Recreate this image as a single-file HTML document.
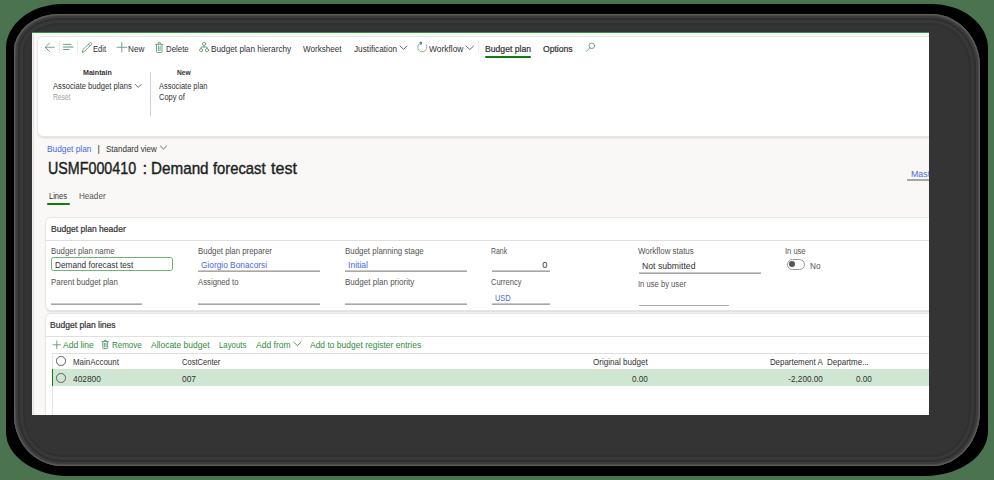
<!DOCTYPE html>
<html><head><meta charset="utf-8">
<style>
html,body{margin:0;padding:0;}
body{width:994px;height:480px;position:relative;overflow:hidden;background:#4b7350;font-family:"Liberation Sans",sans-serif;}
.abs{position:absolute;}
.t{position:absolute;white-space:nowrap;line-height:1;}
#blk{position:absolute;left:6px;top:4px;width:982px;height:472px;background:#000;border-radius:57px 57px 63px 63px / 44px 44px 45px 44px;}
#gry{position:absolute;left:14px;top:14px;width:966px;height:452px;background:#343434;border-radius:45px 49px 48px 48px / 37px 53px 56px 51px;
 box-shadow:inset 0 0 0 1px #5c5c5c, inset 0 0 0 2px #4a4a4a, inset 0 0 0 4px #3c3c3c, inset 0 0 0 6px #2f2f2f, inset 0 0 0 9px #383838, inset 0 0 0 11px #303030;}
#page{position:absolute;left:32px;top:32px;width:897px;height:383px;overflow:hidden;background:#f9f8f7;}
#inner{position:absolute;left:-32px;top:-32px;width:994px;height:480px;}
.panel{position:absolute;background:#fff;border-radius:5px;box-shadow:0 0 0 1px #e8e6e4, 0 1.2px 2px rgba(0,0,0,0.13);}
.hl{position:absolute;height:1px;}
.vl{position:absolute;width:1px;}
svg{position:absolute;overflow:visible;}
</style></head>
<body>
<div id="blk"></div>
<div id="gry"></div>
<div id="page"><div id="inner">
<!-- top green line -->
<div class="hl" style="left:32px;top:32px;width:897px;background:#1f9a3a;"></div>
<div class="hl" style="left:32px;top:33px;width:897px;background:#fff;"></div>
<div class="vl" style="left:32px;top:33px;height:383px;background:#f1f0ef;"></div>
<div class="vl" style="left:33px;top:34px;height:383px;background:#e4e3e2;"></div>
<!-- action pane -->
<div class="panel" style="left:38px;top:37px;width:940px;height:99px;"></div>
<div class="vl" style="left:59px;top:41px;height:12px;background:#ebeae9;"></div>
<div class="vl" style="left:77px;top:41px;height:12px;background:#ebeae9;"></div>
<div class="vl" style="left:478px;top:41px;height:12px;background:#ebeae9;"></div>
<div class="abs" style="left:485px;top:55.5px;width:46px;height:2px;background:#107c10;border-radius:1px;"></div>
<div class="vl" style="left:149.5px;top:72px;height:44px;background:#d2d0ce;"></div>
<!-- header panel -->
<div class="panel" style="left:46px;top:218px;width:940px;height:92px;"></div>
<div class="hl" style="left:46px;top:240px;width:900px;background:#e1dfdd;"></div>
<!-- tabs underline -->
<div class="abs" style="left:46.5px;top:203.3px;width:23.5px;height:2px;background:#107c10;border-radius:1px;"></div>
<!-- mast underline -->
<div class="abs" style="left:907.4px;top:179.3px;width:30px;height:1.5px;background:#a8a6a4;"></div>
<!-- inputs -->
<div class="abs" style="left:51.2px;top:257.3px;width:119.6px;height:11.8px;border:1.3px solid #6cb574;border-radius:2.5px;background:#fff;"></div>
<div class="abs" style="left:198px;top:270px;width:121.7px;height:2px;background:linear-gradient(#cac8c6 50%,#a9a7a5 50%);"></div>
<div class="abs" style="left:345px;top:270px;width:121.6px;height:2px;background:linear-gradient(#cac8c6 50%,#a9a7a5 50%);"></div>
<div class="abs" style="left:491.6px;top:270px;width:58.2px;height:2px;background:linear-gradient(#cac8c6 50%,#a9a7a5 50%);"></div>
<div class="abs" style="left:639px;top:272px;width:121.8px;height:2px;background:linear-gradient(#cac8c6 50%,#a9a7a5 50%);"></div>
<div class="abs" style="left:51px;top:302.5px;width:90.7px;height:2px;background:linear-gradient(#cac8c6 50%,#a9a7a5 50%);"></div>
<div class="abs" style="left:198px;top:302.5px;width:121.7px;height:2px;background:linear-gradient(#cac8c6 50%,#a9a7a5 50%);"></div>
<div class="abs" style="left:345px;top:302.5px;width:121.6px;height:2px;background:linear-gradient(#cac8c6 50%,#a9a7a5 50%);"></div>
<div class="abs" style="left:491.6px;top:302.5px;width:58.2px;height:2px;background:linear-gradient(#cac8c6 50%,#a9a7a5 50%);"></div>
<div class="abs" style="left:639px;top:304.6px;width:90.3px;height:1.4px;background:#a9a7a5;"></div>
<!-- toggle -->
<div class="abs" style="left:786.8px;top:259.2px;width:15.9px;height:8.9px;border:1.25px solid #9d9b99;border-radius:5.5px;"></div>
<div class="abs" style="left:789.1px;top:260.9px;width:5.8px;height:5.8px;border-radius:50%;background:#575553;"></div>
<!-- lines panel -->
<div class="panel" style="left:46px;top:314px;width:940px;height:140px;"></div>
<div class="hl" style="left:46px;top:336px;width:900px;background:#e1dfdd;"></div>
<!-- grid -->
<div class="abs" style="left:51.5px;top:352.8px;width:900px;height:100px;border-left:1px solid #e6e4e2;border-top:1.3px solid #e1dfdd;"></div>
<div class="hl" style="left:52px;top:368.5px;width:900px;background:#dedcda;"></div>
<div class="abs" style="left:52px;top:369.4px;width:900px;height:16.2px;background:#cfe6d2;"></div>
<div class="abs" style="left:51.5px;top:369.4px;width:1.7px;height:16.2px;background:#107c10;"></div>
<div class="abs" style="left:56.3px;top:356px;width:7.5px;height:7.5px;border:1px solid #605e5c;border-radius:50%;"></div>
<div class="abs" style="left:56.3px;top:373.1px;width:7.5px;height:7.5px;border:1px solid #605e5c;border-radius:50%;"></div>
<!-- icons -->
<svg style="left:0;top:0" width="994" height="480" viewBox="0 0 994 480">
 <g fill="none" stroke="#5c9470" stroke-width="0.85" stroke-linecap="round" stroke-linejoin="round">
  <!-- back arrow -->
  <path d="M49.6 43.1 L45.2 47.3 L49.6 51.5 M45.4 47.3 H54.2"/>
  <!-- lines icon -->
  <path d="M63.5 44.4 H71 M63.5 49.5 H69.2" stroke-width="0.9"/><path d="M63.5 47 H73" stroke-width="1.2"/>
  <!-- pencil -->
  <path d="M82.4 52.1 L83 49.6 L89.7 42.9 Q90.5 42.1 91.3 42.9 Q92.1 43.7 91.3 44.5 L84.6 51.3 Z M88.4 44.2 L90 45.8"/>
  <!-- plus -->
  <path d="M117 47.3 H126.7 M121.8 42.5 V52"/>
  <!-- trash -->
  <path d="M155.5 44.3 H163 M156.5 44.5 V51.5 Q156.5 52.5 157.5 52.5 H161 Q162 52.5 162 51.5 V44.5 M158.3 44.2 V43 Q158.3 42.4 158.9 42.4 H159.7 Q160.3 42.4 160.3 43 V44.2 M158.4 46.2 V50.6 M160.1 46.2 V50.6"/>
  <!-- hierarchy -->
  <circle cx="204.1" cy="43.8" r="1.6"/>
  <circle cx="201.1" cy="50.2" r="1.6"/>
  <circle cx="207.1" cy="50.2" r="1.6"/>
  <path d="M204.1 45.4 V47 M201.1 48.6 V47 H207.1 V48.6"/>
  <!-- workflow -->
  <path d="M421.5 42.8 A4.5 4.5 0 1 0 426.2 45" stroke-dasharray="1.2 0.9"/>
  <path d="M420.2 42.3 L421.6 42.8 L420.8 44.2" stroke="#2e7d32" stroke-width="1.2"/>
  <!-- search -->
  <circle cx="591.8" cy="45.8" r="2.8"/>
  <path d="M589.8 47.9 L586.3 51.5"/>
  <!-- grid toolbar plus -->
  <path d="M53 344.8 H60.6 M56.8 341 V348.6"/>
  <!-- grid trash -->
  <path d="M102 341.6 H108.4 M102.8 341.8 V347.8 Q102.8 348.6 103.6 348.6 H106.8 Q107.6 348.6 107.6 347.8 V341.8 M104.2 341.5 V340.4 H106.2 V341.5 M104.4 343.4 V347 M106 343.4 V347" stroke-width="0.9"/>
 </g>
 <g fill="none" stroke="#514f4d" stroke-width="0.85" stroke-linecap="round" stroke-linejoin="round">
  <!-- chevrons -->
  <path d="M400 46 L403.5 49.4 L407 46"/>
  <path d="M466 46 L469.8 49.6 L473.6 46"/>
  <path d="M135.2 84.4 L138.2 87.4 L141.2 84.4"/>
  <path d="M160.4 146 L163.5 149 L166.6 146"/>
 </g>
 <g fill="none" stroke="#44904f" stroke-width="0.9" stroke-linecap="round" stroke-linejoin="round">
  <path d="M293.8 342.2 L297.4 345.7 L301 342.2"/>
 </g>
</svg>

<div class="t" style="top:45px;font-size:9.18px;color:#323130;left:92.80px;transform-origin:0 50%;transform:scaleX(0.8305);">Edit</div>
<div class="t" style="top:45px;font-size:9.18px;color:#323130;left:127.80px;transform-origin:0 50%;transform:scaleX(0.8919);">New</div>
<div class="t" style="top:45px;font-size:9.18px;color:#323130;left:166.20px;transform-origin:0 50%;transform:scaleX(0.8557);">Delete</div>
<div class="t" style="top:45px;font-size:9.18px;color:#323130;left:210.80px;transform-origin:0 50%;transform:scaleX(0.8991);">Budget plan hierarchy</div>
<div class="t" style="top:45px;font-size:9.18px;color:#323130;left:303.00px;transform-origin:0 50%;transform:scaleX(0.8839);">Worksheet</div>
<div class="t" style="top:45px;font-size:9.18px;color:#323130;left:353.70px;transform-origin:0 50%;transform:scaleX(0.8992);">Justification</div>
<div class="t" style="top:45px;font-size:9.18px;color:#323130;left:428.50px;transform-origin:0 50%;transform:scaleX(0.9151);">Workflow</div>
<div class="t" style="top:45px;font-size:9.18px;color:#323130;left:485.00px;transform-origin:0 50%;transform:scaleX(0.9415);-webkit-text-stroke:0.22px #323130;">Budget plan</div>
<div class="t" style="top:45px;font-size:9.18px;color:#323130;left:542.50px;transform-origin:0 50%;transform:scaleX(0.9368);-webkit-text-stroke:0.22px #323130;">Options</div>
<div class="t" style="top:69px;font-size:7.84px;color:#323130;font-weight:bold;left:82.80px;transform-origin:0 50%;transform:scaleX(0.9072);">Maintain</div>
<div class="t" style="top:82px;font-size:8.51px;color:#323130;left:52.80px;transform-origin:0 50%;transform:scaleX(0.8957);">Associate budget plans</div>
<div class="t" style="top:93px;font-size:8.29px;color:#a19f9d;left:52.80px;transform-origin:0 50%;transform:scaleX(0.8060);">Reset</div>
<div class="t" style="top:69px;font-size:7.84px;color:#323130;font-weight:bold;left:176.70px;transform-origin:0 50%;transform:scaleX(0.8467);">New</div>
<div class="t" style="top:82px;font-size:8.51px;color:#323130;left:159.20px;transform-origin:0 50%;transform:scaleX(0.8766);">Associate plan</div>
<div class="t" style="top:93px;font-size:8.51px;color:#323130;left:159.40px;transform-origin:0 50%;transform:scaleX(0.8820);">Copy of</div>
<div class="t" style="top:145px;font-size:9.18px;color:#4a68e6;left:46.70px;transform-origin:0 50%;transform:scaleX(0.9088);">Budget plan</div>
<div class="t" style="top:145px;font-size:9.18px;color:#323130;left:97.40px;transform-origin:0 50%;">|</div>
<div class="t" style="top:145px;font-size:9.18px;color:#323130;left:105.50px;transform-origin:0 50%;transform:scaleX(0.8718);">Standard view</div>
<div class="t" style="top:161px;font-size:16.69px;color:#201f1e;left:48.16px;transform-origin:0 50%;transform:scaleX(0.8556);-webkit-text-stroke:0.4px #201f1e;">USMF000410</div>
<div class="t" style="top:161px;font-size:16.69px;color:#201f1e;left:142.40px;transform-origin:0 50%;-webkit-text-stroke:0.4px #201f1e;">:</div>
<div class="t" style="top:161px;font-size:16.69px;color:#201f1e;left:151.31px;transform-origin:0 50%;transform:scaleX(0.9127);-webkit-text-stroke:0.4px #201f1e;">Demand</div>
<div class="t" style="top:161px;font-size:16.69px;color:#201f1e;left:213.20px;transform-origin:0 50%;transform:scaleX(0.8858);-webkit-text-stroke:0.4px #201f1e;">forecast</div>
<div class="t" style="top:161px;font-size:16.69px;color:#201f1e;left:271.30px;transform-origin:0 50%;transform:scaleX(0.9611);-webkit-text-stroke:0.4px #201f1e;">test</div>
<div class="t" style="top:170px;font-size:9.3px;color:#4a68e6;left:910.80px;transform-origin:0 50%;transform:scaleX(0.9483);">Mast</div>
<div class="t" style="top:192px;font-size:8.96px;color:#323130;left:48.60px;transform-origin:0 50%;transform:scaleX(0.8346);">Lines</div>
<div class="t" style="top:192px;font-size:8.96px;color:#55534f;left:78.80px;transform-origin:0 50%;transform:scaleX(0.9053);">Header</div>
<div class="t" style="top:225px;font-size:9.18px;color:#323130;left:50.50px;transform-origin:0 50%;transform:scaleX(0.9336);-webkit-text-stroke:0.22px #323130;">Budget plan header</div>
<div class="t" style="top:247px;font-size:8.85px;color:#55534f;left:50.70px;transform-origin:0 50%;transform:scaleX(0.8850);">Budget plan name</div>
<div class="t" style="top:247px;font-size:8.85px;color:#55534f;left:197.60px;transform-origin:0 50%;transform:scaleX(0.8900);">Budget plan preparer</div>
<div class="t" style="top:247px;font-size:8.85px;color:#55534f;left:344.70px;transform-origin:0 50%;transform:scaleX(0.8944);">Budget planning stage</div>
<div class="t" style="top:247px;font-size:8.85px;color:#55534f;left:491.40px;transform-origin:0 50%;transform:scaleX(0.7821);">Rank</div>
<div class="t" style="top:247px;font-size:8.85px;color:#55534f;left:638.20px;transform-origin:0 50%;transform:scaleX(0.8945);">Workflow status</div>
<div class="t" style="top:247px;font-size:8.85px;color:#55534f;left:785.20px;transform-origin:0 50%;transform:scaleX(0.8522);">In use</div>
<div class="t" style="top:278px;font-size:8.85px;color:#55534f;left:50.70px;transform-origin:0 50%;transform:scaleX(0.8955);">Parent budget plan</div>
<div class="t" style="top:278px;font-size:8.85px;color:#55534f;left:197.60px;transform-origin:0 50%;transform:scaleX(0.8770);">Assigned to</div>
<div class="t" style="top:278px;font-size:8.85px;color:#55534f;left:344.70px;transform-origin:0 50%;transform:scaleX(0.9091);">Budget plan priority</div>
<div class="t" style="top:278px;font-size:8.85px;color:#55534f;left:491.40px;transform-origin:0 50%;transform:scaleX(0.8504);">Currency</div>
<div class="t" style="top:280px;font-size:8.85px;color:#55534f;left:638.20px;transform-origin:0 50%;transform:scaleX(0.8632);">In use by user</div>
<div class="t" style="top:261px;font-size:9.3px;color:#323130;left:54.50px;transform-origin:0 50%;transform:scaleX(0.8854);">Demand forecast test</div>
<div class="t" style="top:261px;font-size:9.3px;color:#4a68e6;left:200.80px;transform-origin:0 50%;transform:scaleX(0.8940);">Giorgio Bonacorsi</div>
<div class="t" style="top:261px;font-size:9.3px;color:#4a68e6;left:348.20px;transform-origin:0 50%;transform:scaleX(0.9197);">Initial</div>
<div class="t" style="top:261px;font-size:9.3px;color:#323130;right:446.70px;transform-origin:100% 50%;">0</div>
<div class="t" style="top:262px;font-size:9.3px;color:#323130;left:642.00px;transform-origin:0 50%;transform:scaleX(0.9320);">Not submitted</div>
<div class="t" style="top:262px;font-size:9.3px;color:#55534f;left:810.20px;transform-origin:0 50%;transform:scaleX(0.8878);">No</div>
<div class="t" style="top:294px;font-size:9.3px;color:#4a68e6;left:494.80px;transform-origin:0 50%;transform:scaleX(0.7984);">USD</div>
<div class="t" style="top:321px;font-size:9.18px;color:#323130;left:50.40px;transform-origin:0 50%;transform:scaleX(0.9324);-webkit-text-stroke:0.22px #323130;">Budget plan lines</div>
<div class="t" style="top:341px;font-size:9.3px;color:#338a40;left:63.30px;transform-origin:0 50%;transform:scaleX(0.9125);">Add line</div>
<div class="t" style="top:341px;font-size:9.3px;color:#338a40;left:112.00px;transform-origin:0 50%;transform:scaleX(0.8593);">Remove</div>
<div class="t" style="top:341px;font-size:9.3px;color:#338a40;left:150.50px;transform-origin:0 50%;transform:scaleX(0.9130);">Allocate budget</div>
<div class="t" style="top:341px;font-size:9.3px;color:#338a40;left:218.70px;transform-origin:0 50%;transform:scaleX(0.8386);">Layouts</div>
<div class="t" style="top:341px;font-size:9.3px;color:#338a40;left:255.50px;transform-origin:0 50%;transform:scaleX(0.9164);">Add from</div>
<div class="t" style="top:341px;font-size:9.3px;color:#338a40;left:310.00px;transform-origin:0 50%;transform:scaleX(0.9116);">Add to budget register entries</div>
<div class="t" style="top:358px;font-size:8.96px;color:#323130;left:73.20px;transform-origin:0 50%;transform:scaleX(0.8858);">MainAccount</div>
<div class="t" style="top:358px;font-size:8.96px;color:#323130;left:181.50px;transform-origin:0 50%;transform:scaleX(0.8455);">CostCenter</div>
<div class="t" style="top:358px;font-size:8.96px;color:#323130;right:345.80px;transform-origin:100% 50%;transform:scaleX(0.9014);">Original budget</div>
<div class="t" style="top:358px;font-size:8.96px;color:#323130;right:171.70px;transform-origin:100% 50%;transform:scaleX(0.8847);">Departement A</div>
<div class="t" style="top:358px;font-size:8.96px;color:#323130;left:826.70px;transform-origin:0 50%;transform:scaleX(0.8945);">Departme...</div>
<div class="t" style="top:375px;font-size:9.18px;color:#323130;left:73.20px;transform-origin:0 50%;transform:scaleX(0.9081);">402800</div>
<div class="t" style="top:375px;font-size:9.18px;color:#323130;left:181.50px;transform-origin:0 50%;transform:scaleX(0.9144);">007</div>
<div class="t" style="top:375px;font-size:9.18px;color:#323130;right:346.00px;transform-origin:100% 50%;transform:scaleX(0.8901);">0.00</div>
<div class="t" style="top:375px;font-size:9.18px;color:#323130;right:171.70px;transform-origin:100% 50%;transform:scaleX(0.8873);">-2,200.00</div>
<div class="t" style="top:375px;font-size:9.18px;color:#323130;right:122.40px;transform-origin:100% 50%;transform:scaleX(0.8901);">0.00</div>
</div></div>
</body></html>
